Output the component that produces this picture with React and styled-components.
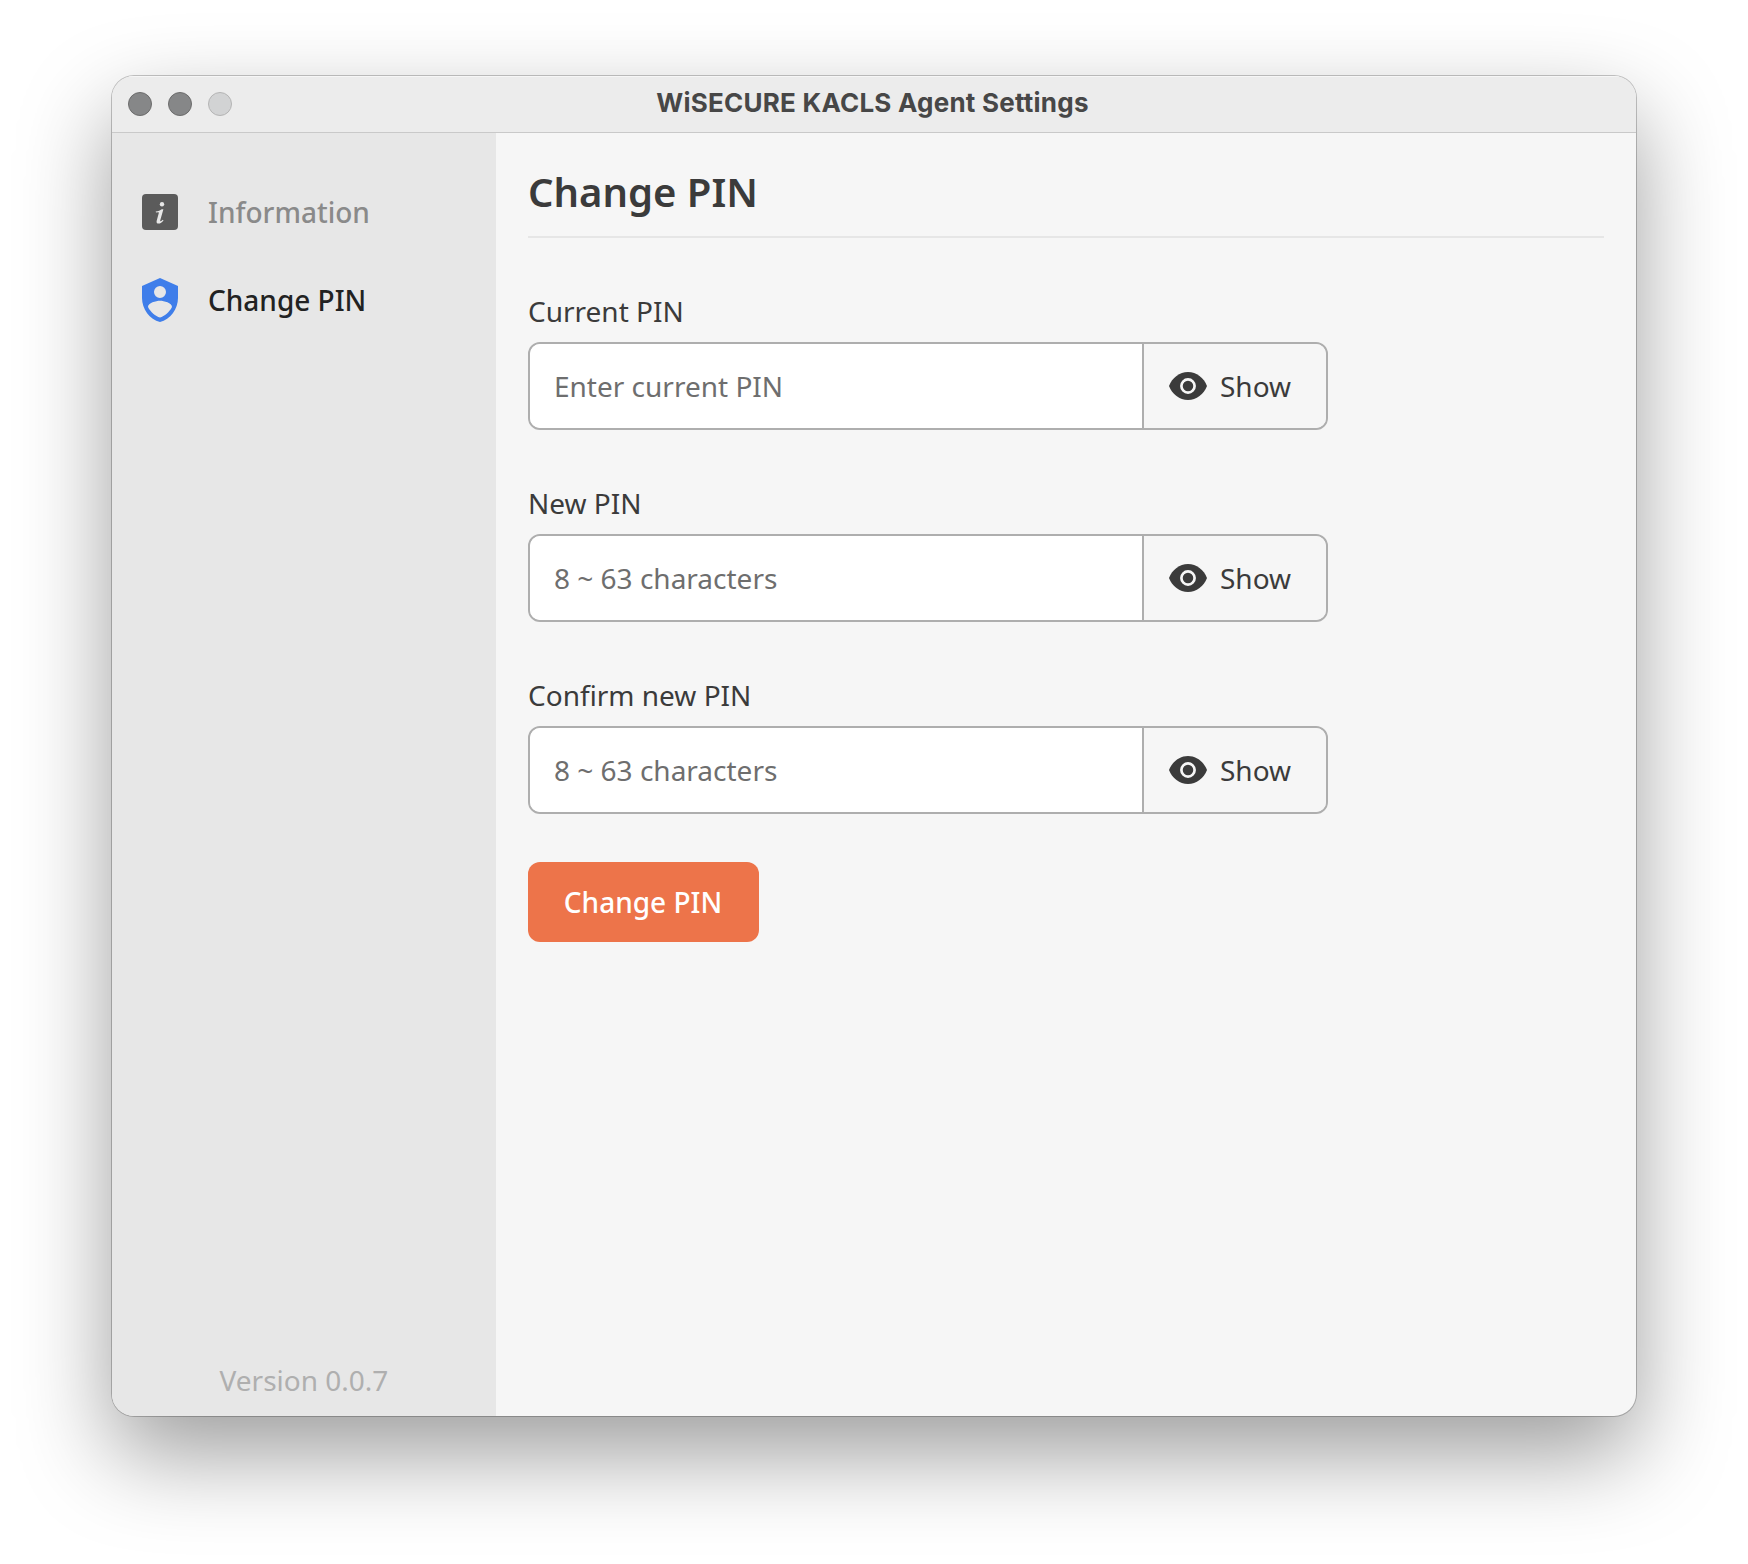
import React from "react";
import styled, { createGlobalStyle } from "styled-components";

const Global = createGlobalStyle`
  * { box-sizing: border-box; }
  body { margin: 0; background: #fff; }
`;

const Desktop = styled.div`
  width: 1748px;
  height: 1564px;
  padding: 76px 112px 148px;
  overflow: hidden;
  background: #fff;
  font-family: "Noto Sans", sans-serif;
  font-size: 28px;
  color: #3b3b3b;
`;

const Window = styled.div`
  width: 1524px;
  height: 1340px;
  display: flex;
  flex-direction: column;
  border-radius: 22px;
  overflow: hidden;
  background: #f6f6f6;
  box-shadow: 0 0 0 1px rgba(0, 0, 0, 0.22), 0 38px 92px rgba(0, 0, 0, 0.39);
`;

const TitleBar = styled.header`
  flex: none;
  height: 57px;
  display: grid;
  grid-template-columns: 104px 1fr 104px;
  align-items: center;
  padding: 0 16px;
  background: #ececec;
  border-bottom: 1px solid #c9c9c9;
  box-shadow: inset 0 1px 0 #f6f6f6;
`;

const Lights = styled.div`
  display: flex;
  gap: 16px;
`;

const Light = styled.span`
  width: 24px;
  height: 24px;
  border-radius: 50%;
  background: ${(p) => (p.$disabled ? "#d2d3d4" : "#868788")};
  border: 1px solid ${(p) => (p.$disabled ? "#b4b4b4" : "#6c6c6c")};
`;

const Title = styled.div`
  text-align: center;
  font-family: Inter, sans-serif;
  font-size: 26px;
  font-weight: 700;
  line-height: 32px;
  letter-spacing: 0.23px;
  color: #474747;
  white-space: nowrap;
  padding: 0 3px 2px 0;
`;

const Body = styled.div`
  flex: 1;
  display: flex;
`;

const Sidebar = styled.aside`
  width: 384px;
  display: flex;
  flex-direction: column;
  justify-content: space-between;
  padding: 35px 30px 17px;
  background: #e7e7e7;
`;

const NavItem = styled.div`
  height: 88px;
  display: grid;
  grid-template-columns: 36px 1fr;
  column-gap: 30px;
  align-items: center;
  font-weight: 500;
  color: ${(p) => (p.$active ? "#222" : "#8a8a8a")};
`;

const Version = styled.div`
  text-align: center;
  line-height: 38px;
  color: #afafaf;
`;

const Main = styled.main`
  flex: 1;
  padding: 31px 32px;
`;

const Heading = styled.h1`
  margin: 0 0 48px;
  height: 74px;
  font-size: 40px;
  font-weight: 600;
  line-height: 56px;
  border-bottom: 2px solid #e6e6e6;
`;

const Field = styled.div`
  width: 800px;
  margin-bottom: 48px;
`;

const Label = styled.label`
  display: block;
  height: 56px;
  line-height: 50px;
`;

const InputGroup = styled.div`
  display: flex;
  height: 88px;
  border: 2px solid #aeaeae;
  border-radius: 12px;
  overflow: hidden;
`;

const Input = styled.input`
  flex: 1;
  min-width: 0;
  border: 0;
  outline: 0;
  padding: 0 24px;
  background: #fff;
  font: inherit;
  &::placeholder { color: #6e6e6e; opacity: 1; }
`;

const ShowButton = styled.button`
  width: 184px;
  display: flex;
  align-items: center;
  gap: 13px;
  padding: 0 0 0 25px;
  border: 0;
  border-left: 2px solid #aeaeae;
  background: #f6f6f6;
  color: inherit;
  font: inherit;
`;

const Submit = styled.button`
  width: 231px;
  height: 80px;
  padding: 0 1px 0 0;
  border: 0;
  border-radius: 12px;
  background: #ed744a;
  color: #fff;
  font: inherit;
  font-weight: 500;
`;

const InfoIcon = () => (
  <svg width="36" height="36" viewBox="0 0 36 36">
    <rect width="36" height="36" rx="4" fill="#5b5b5b" />
    <circle cx="20" cy="10.2" r="2.2" fill="#e7e7e7" />
    <path d="M13.7 17.6c2.6-.4 4.6-1.4 6-2.4h1.7l-3.2 11.3c-.2.8.4 1 1 .5l1.7-1.3.6.7c-1.5 1.8-3.2 3.2-5 3.2-1.7 0-2.3-1.1-1.8-2.9l2.1-7.6c.2-.7 0-.9-.7-.8l-2.1.3z" fill="#e7e7e7" />
  </svg>
);

const ShieldIcon = () => (
  <svg width="36" height="44" viewBox="0 0 36 44">
    <path
      fillRule="evenodd"
      fill="#3f7eea"
      d="M18 0 36 8v12c0 11.1-7.68 21.48-18 24C7.68 41.48 0 31.1 0 20V8zM18 8a6 6 0 1 0 0 12 6 6 0 0 0 0-12zM18 22.8c-4 0-12 2.2-12 6.2 2.58 5.2 7.5 9 12 10.6 4.5-1.6 9.42-5.4 12-10.6 0-4-8-6.2-12-6.2z"
    />
  </svg>
);

const EyeIcon = () => (
  <svg width="38" height="28" viewBox="0 0 38 28">
    <path d="M19 0C10.5 0 3.2 5.8 0 14c3.2 8.2 10.5 14 19 14s15.8-5.8 19-14C34.8 5.8 27.5 0 19 0z" fill="#3b3b3b" />
    <circle cx="19" cy="14" r="6.6" fill="none" stroke="#f6f6f6" strokeWidth="2.7" />
  </svg>
);

const fields = [
  { id: "current", label: "Current PIN", placeholder: "Enter current PIN" },
  { id: "new", label: "New PIN", placeholder: "8 ~ 63 characters" },
  { id: "confirm", label: "Confirm new PIN", placeholder: "8 ~ 63 characters" },
];

export default function App() {
  return (
    <Desktop>
      <Global />
      <Window>
        <TitleBar>
          <Lights>
            <Light />
            <Light />
            <Light $disabled />
          </Lights>
          <Title>WiSECURE KACLS Agent Settings</Title>
        </TitleBar>
        <Body>
          <Sidebar>
            <nav>
              <NavItem><InfoIcon />Information</NavItem>
              <NavItem $active><ShieldIcon />Change PIN</NavItem>
            </nav>
            <Version>Version 0.0.7</Version>
          </Sidebar>
          <Main>
            <Heading>Change PIN</Heading>
            {fields.map((f) => (
              <Field key={f.id}>
                <Label htmlFor={f.id}>{f.label}</Label>
                <InputGroup>
                  <Input id={f.id} type="password" placeholder={f.placeholder} />
                  <ShowButton type="button"><EyeIcon />Show</ShowButton>
                </InputGroup>
              </Field>
            ))}
            <Submit type="button">Change PIN</Submit>
          </Main>
        </Body>
      </Window>
    </Desktop>
  );
}
